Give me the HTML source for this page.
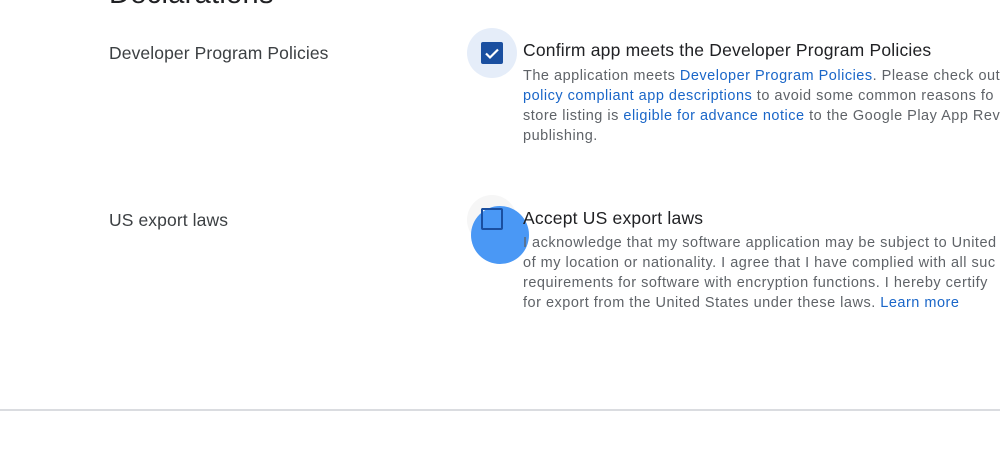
<!DOCTYPE html>
<html><head><style>
body{margin:0;width:1000px;height:468px;overflow:hidden;background:#fff;font-family:"Liberation Sans",sans-serif;position:relative;color:#3c4043}
.a{position:absolute;white-space:nowrap}
h1{position:absolute;left:109px;top:-22px;margin:0;font-size:29px;font-weight:normal;color:#202124;letter-spacing:0.3px}
.lbl{font-size:17.5px;color:#3c4043;letter-spacing:0.1px}
.t{font-size:17.5px;color:#202124;letter-spacing:0.2px}
.d{font-size:14.5px;color:#5f6368;line-height:20px;letter-spacing:0.5px}
.d span{color:#1a66c8}
</style></head><body>
<h1>Declarations</h1>
<div class="a lbl" style="left:109px;top:43px">Developer Program Policies</div>
<div class="a lbl" style="left:109px;top:210px">US export laws</div>

<div class="a" style="left:467px;top:28px;width:50px;height:50px;border-radius:50%;background:#e5edf9"></div>
<div class="a" style="left:481px;top:42px;width:22px;height:22px;border-radius:2px;background:#1a4fa0"></div>
<svg class="a" style="left:481px;top:42px" width="22" height="22"><path d="M5 11.5l4 4 8-8" stroke="#fff" stroke-width="2.2" fill="none"/></svg>
<div class="a t" style="left:523px;top:40px">Confirm app meets the Developer Program Policies</div>
<div class="a d" style="left:523px;top:66px">The application meets <span>Developer Program Policies</span>. Please check out<br><span>policy compliant app descriptions</span> to avoid some common reasons fo<br>store listing is <span>eligible for advance notice</span> to the Google Play App Rev<br>publishing.</div>

<div class="a" style="left:467px;top:195px;width:50px;height:50px;border-radius:50%;background:#f6f6f6"></div>
<div class="a" style="left:481px;top:208px;width:18px;height:18px;border:2px solid #202124;border-radius:2px"></div>
<div class="a" style="left:471px;top:206px;width:58px;height:58px;border-radius:50%;background:#4a98f5"></div>
<div class="a" style="left:481px;top:208px;width:18px;height:18px;border:2px solid #1a4fa0;border-radius:2px"></div>
<div class="a t" style="left:523px;top:208px">Accept US export laws</div>
<div class="a d" style="left:523px;top:233px">I acknowledge that my software application may be subject to United<br>of my location or nationality. I agree that I have complied with all suc<br>requirements for software with encryption functions. I hereby certify<br>for export from the United States under these laws. <span>Learn more</span></div>

<div class="a" style="left:0;top:409px;width:1000px;height:2px;background:#dadce0"></div>
</body></html>
